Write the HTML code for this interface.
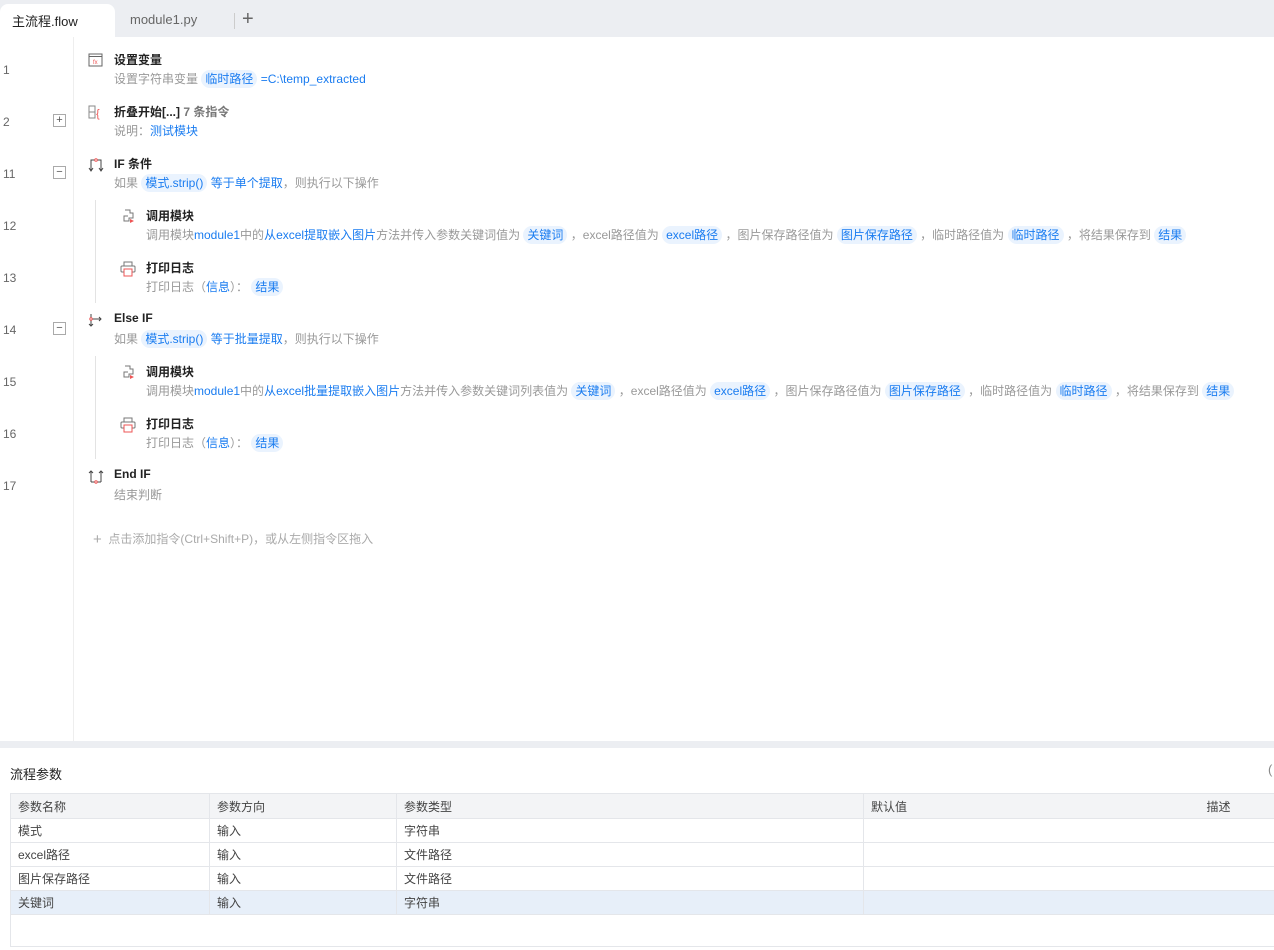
<!DOCTYPE html>
<html><head><meta charset="utf-8"><style>
*{margin:0;padding:0;box-sizing:border-box}
body{width:1274px;height:950px;overflow:hidden;background:#fff;font-family:"Liberation Sans","Noto Sans CJK SC",sans-serif;color:#222;position:relative}
.tabs{position:absolute;left:0;top:0;width:1274px;height:37px;background:#eceef2}
.tab1{position:absolute;left:0;top:4px;width:115px;height:33px;background:#fff;border-radius:8px 8px 0 0;font-size:13px;padding:7px 0 0 12px;color:#222}
.tab2{position:absolute;left:130px;top:12px;font-size:13px;color:#666}
.sep{position:absolute;left:234px;top:13px;width:1px;height:16px;background:#ccc}
.plus{position:absolute;left:242px;top:8px;font-size:20px;color:#666;line-height:22px}
.gutter{position:absolute;left:73px;top:37px;width:1px;height:704px;background:#eee}
.ln{position:absolute;left:3px;font-size:12px;color:#666}
.box{position:absolute;left:53px;width:13px;height:13px;border:1px solid #aaa;font-size:11px;line-height:10px;text-align:center;color:#555}
.t{position:absolute;font-size:12px;font-weight:bold;color:#222;white-space:nowrap}
.d{position:absolute;font-size:12px;color:#999;white-space:nowrap}
.b{color:#1a7cf0}
.g{background:#eaf3fe;color:#1a7cf0;border-radius:9px;padding:2px 4px}
.vl{position:absolute;left:95px;width:1px;background:#e3e3e3}
.ic{position:absolute}
.band{position:absolute;left:0;top:741px;width:1274px;height:7px;background:#eceef2}
table{position:absolute;left:10px;top:793px;width:1270px;border-collapse:collapse;font-size:12px;color:#444}
td{height:24px;border:1px solid #e4e6ea;padding-left:7px}
tr.h td{background:#f3f4f6;height:25px}
tr.s td{background:#e7eff9}
</style></head><body>
<div class="tabs"><div class="tab1">主流程.flow</div><div class="tab2">module1.py</div><div class="sep"></div><div class="plus">+</div></div>
<div class="gutter"></div>

<div class="ln" style="top:63px">1</div>
<div class="ln" style="top:115px">2</div><div class="box" style="top:114px">+</div>
<div class="ln" style="top:167px">11</div><div class="box" style="top:166px">−</div>
<div class="ln" style="top:219px">12</div>
<div class="ln" style="top:271px">13</div>
<div class="ln" style="top:323px">14</div><div class="box" style="top:322px">−</div>
<div class="ln" style="top:375px">15</div>
<div class="ln" style="top:427px">16</div>
<div class="ln" style="top:479px">17</div>

<svg class="ic" style="left:88px;top:53px" width="16" height="14"><rect x="1" y="1" width="13" height="12" fill="none" stroke="#666"/><line x1="1" y1="3.5" x2="14" y2="3.5" stroke="#666"/><text x="5" y="11" font-size="6" fill="#e55">fx</text></svg>
<div class="t" style="left:114px;top:51px">设置变量</div>
<div class="d" style="left:114px;top:70px">设置字符串变量 <span class="g">临时路径</span> <span class="b">=C:\temp_extracted</span></div>

<svg class="ic" style="left:88px;top:104px" width="16" height="16"><rect x="1" y="2" width="6" height="12" fill="none" stroke="#888"/><line x1="1" y1="8" x2="7" y2="8" stroke="#888"/><text x="8" y="13" font-size="11" fill="#e55">{</text></svg>
<div class="t" style="left:114px;top:103px">折叠开始[...] <span style="color:#777">7 条指令</span></div>
<div class="d" style="left:114px;top:122px">说明：<span class="b">测试模块</span></div>

<svg class="ic" style="left:88px;top:157px" width="16" height="16"><path d="M3 14V3h10v11M1 11l2 3 2-3M11 11l2 3 2-3" fill="none" stroke="#444"/><circle cx="8" cy="3" r="1.3" fill="#fff" stroke="#e55"/></svg>
<div class="t" style="left:114px;top:155px">IF 条件</div>
<div class="d" style="left:114px;top:174px">如果 <span class="g">模式.strip()</span> <span class="b">等于单个提取</span>，则执行以下操作</div>

<div class="vl" style="top:200px;height:103px"></div>
<svg class="ic" style="left:120px;top:208px" width="16" height="16"><path d="M5 2h5v3h3v5h-4v3H4v-5h4" fill="none" stroke="#777"/><path d="M10 11l4 2-4 2z" fill="#e55"/></svg>
<div class="t" style="left:146px;top:207px">调用模块</div>
<div class="d" style="left:146px;top:226px">调用模块<span class="b">module1</span>中的<span class="b">从excel提取嵌入图片</span>方法并传入参数关键词值为 <span class="g">关键词</span> ，excel路径值为 <span class="g">excel路径</span> ，图片保存路径值为 <span class="g">图片保存路径</span> ，临时路径值为 <span class="g">临时路径</span> ，将结果保存到 <span class="g">结果</span></div>

<svg class="ic" style="left:120px;top:261px" width="16" height="16"><rect x="4" y="1" width="8" height="4" fill="none" stroke="#777"/><rect x="1" y="5" width="14" height="6" rx="1" fill="none" stroke="#777"/><rect x="4" y="8" width="8" height="7" fill="#fff" stroke="#e55"/></svg>
<div class="t" style="left:146px;top:259px">打印日志</div>
<div class="d" style="left:146px;top:278px">打印日志（<span class="b">信息</span>）： <span class="g">结果</span></div>

<svg class="ic" style="left:88px;top:312px" width="16" height="16"><path d="M3 2v12M1 12l2 2 2-2M3 7h10M11 5l2 2-2 2" fill="none" stroke="#444"/><circle cx="3" cy="7" r="1.2" fill="#fff" stroke="#e55"/></svg>
<div class="t" style="left:114px;top:311px">Else IF</div>
<div class="d" style="left:114px;top:330px">如果 <span class="g">模式.strip()</span> <span class="b">等于批量提取</span>，则执行以下操作</div>

<div class="vl" style="top:356px;height:103px"></div>
<svg class="ic" style="left:120px;top:364px" width="16" height="16"><path d="M5 2h5v3h3v5h-4v3H4v-5h4" fill="none" stroke="#777"/><path d="M10 11l4 2-4 2z" fill="#e55"/></svg>
<div class="t" style="left:146px;top:363px">调用模块</div>
<div class="d" style="left:146px;top:382px">调用模块<span class="b">module1</span>中的<span class="b">从excel批量提取嵌入图片</span>方法并传入参数关键词列表值为 <span class="g">关键词</span> ，excel路径值为 <span class="g">excel路径</span> ，图片保存路径值为 <span class="g">图片保存路径</span> ，临时路径值为 <span class="g">临时路径</span> ，将结果保存到 <span class="g">结果</span></div>

<svg class="ic" style="left:120px;top:417px" width="16" height="16"><rect x="4" y="1" width="8" height="4" fill="none" stroke="#777"/><rect x="1" y="5" width="14" height="6" rx="1" fill="none" stroke="#777"/><rect x="4" y="8" width="8" height="7" fill="#fff" stroke="#e55"/></svg>
<div class="t" style="left:146px;top:415px">打印日志</div>
<div class="d" style="left:146px;top:434px">打印日志（<span class="b">信息</span>）： <span class="g">结果</span></div>

<svg class="ic" style="left:88px;top:468px" width="16" height="16"><path d="M3 14V3M1 5l2-2 2 2M13 14V3M11 5l2-2 2 2M3 14h10" fill="none" stroke="#444"/><circle cx="8" cy="14" r="1.2" fill="#fff" stroke="#e55"/></svg>
<div class="t" style="left:114px;top:467px">End IF</div>
<div class="d" style="left:114px;top:486px">结束判断</div>

<div class="d" style="left:93px;top:530px;color:#aaa"><span style="font-size:15px;position:relative;top:1px">+</span>&nbsp; 点击添加指令(Ctrl+Shift+P)，或从左侧指令区拖入</div>

<div class="band"></div>
<div style="position:absolute;left:10px;top:764px;font-size:13px;color:#222">流程参数</div>
<div style="position:absolute;left:1268px;top:762px;font-size:13px;color:#888">(</div>
<table>
<tr class="h"><td style="width:199px">参数名称</td><td style="width:187px">参数方向</td><td style="width:467px">参数类型</td><td>默认值<span style="position:absolute;left:1196px">描述</span></td></tr>
<tr><td>模式</td><td>输入</td><td>字符串</td><td></td></tr>
<tr><td>excel路径</td><td>输入</td><td>文件路径</td><td></td></tr>
<tr><td>图片保存路径</td><td>输入</td><td>文件路径</td><td></td></tr>
<tr class="s"><td>关键词</td><td>输入</td><td>字符串</td><td></td></tr>
<tr><td colspan="4" style="height:32px;border-top:1px solid #e4e6ea"></td></tr>
</table>
</body></html>
